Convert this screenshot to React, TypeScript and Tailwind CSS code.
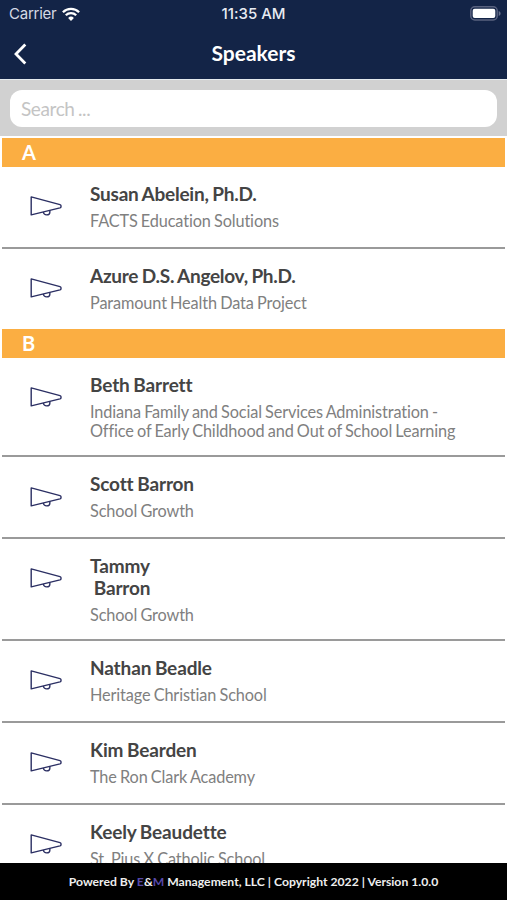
import { useState } from "react";

type Speaker = { name: string[]; org: string[]; tracking?: string };
type Section = { letter: string; speakers: Speaker[] };

const SECTIONS: Section[] = [
  {
    letter: "A",
    speakers: [
      {
        name: ["Susan Abelein, Ph.D."],
        org: ["FACTS Education Solutions"],
        tracking: "tracking-[-0.23px]",
      },
      {
        name: ["Azure D.S. Angelov, Ph.D."],
        org: ["Paramount Health Data Project"],
        tracking: "tracking-[-0.28px]",
      },
    ],
  },
  {
    letter: "B",
    speakers: [
      {
        name: ["Beth Barrett"],
        org: [
          "Indiana Family and Social Services Administration -",
          "Office of Early Childhood and Out of School Learning",
        ],
      },
      { name: ["Scott Barron"], org: ["School Growth"] },
      { name: ["Tammy", " Barron"], org: ["School Growth"] },
      { name: ["Nathan Beadle"], org: ["Heritage Christian School"] },
      { name: ["Kim Bearden"], org: ["The Ron Clark Academy"] },
      { name: ["Keely Beaudette"], org: ["St. Pius X Catholic School"] },
    ],
  },
];

function WifiIcon() {
  return (
    <svg width="18" height="14" viewBox="0 0 18 14" fill="none" stroke="#fff" strokeWidth="2.3">
      <path d="M0.9 5.2a11.5 11.5 0 0 1 16.2 0" />
      <path d="M3.8 8.2a7.4 7.4 0 0 1 10.4 0" />
      <path d="M9 13.9l-2.9-3a4.1 4.1 0 0 1 5.8 0z" fill="#fff" stroke="none" />
    </svg>
  );
}

function BatteryIcon() {
  return (
    <svg width="31" height="15" viewBox="0 0 31 15" fill="none">
      <rect x="0.8" y="0.8" width="26.4" height="13.2" rx="4" stroke="#59627f" strokeWidth="1.5" />
      <rect x="2.7" y="2.7" width="22.6" height="9.4" rx="2" fill="#fff" />
      <path d="M28.7 5v5c1.2-.5 1.9-1.4 1.9-2.5S29.9 5.5 28.7 5z" fill="#68718c" />
    </svg>
  );
}

function Megaphone() {
  return (
    <svg
      width="34"
      height="22"
      viewBox="0 0 34 22"
      fill="none"
      stroke="#2b2f63"
      strokeWidth="1.4"
      strokeLinejoin="round"
      className="shrink-0"
    >
      <path d="M2.2 1.9L31 9.6q1 .3 1 1.2v.9q0 .9-1 1.2L2.2 19.9z" />
      <path d="M14.3 17c.3 1.8 1.5 2.9 3.3 2.9s3.3-1.4 3.3-3.2c0-.5-.1-.9-.3-1.2" />
    </svg>
  );
}

function SpeakerRow({ speaker, last }: { speaker: Speaker; last: boolean }) {
  return (
    <li
      className={`mx-[2px] flex pb-[14.4px] pl-[27px] ${last ? "min-h-[80.2px]" : "min-h-[81.8px] border-b-2 border-[#9a9a9a]"}`}
    >
      <div className="w-[61px] shrink-0 pt-[28.5px]">
        <Megaphone />
      </div>
      <div className="whitespace-pre pt-[16px]">
        <h2
          className={`text-[19px] font-bold leading-[22px] text-[#444] [word-spacing:-0.8px] ${speaker.tracking ?? "tracking-[-0.14px]"}`}
        >
          {speaker.name.join("\n")}
        </h2>
        <p className="mt-[6px] text-[16.3px] leading-[19.6px] tracking-[-0.13px] text-[#808080] [word-spacing:-0.8px]">
          {speaker.org.join("\n")}
        </p>
      </div>
    </li>
  );
}

export default function App() {
  const [query, setQuery] = useState("");

  return (
    <div className="flex h-[900px] w-[507px] flex-col overflow-hidden bg-white font-['Lato',sans-serif] [font-variant-ligatures:none]">
      <header className="h-[79px] shrink-0 bg-[#132447] text-white">
        {/* status bar */}
        <div className="grid h-[27px] grid-cols-3 items-center pl-[9px] pr-[6px] font-['Inter',sans-serif] text-[15px]">
          <div className="flex items-center gap-[6px] text-[#d5dae5]">
            <span className="pt-px tracking-[-0.25px]">Carrier</span>
            <WifiIcon />
          </div>
          <span className="pr-[3px] pt-px text-center font-medium text-[#e8ebf2]">11:35 AM</span>
          <div className="flex justify-end">
            <BatteryIcon />
          </div>
        </div>
        {/* title bar */}
        <div className="grid h-[52px] grid-cols-[60px_1fr_60px] items-center">
          <button type="button" aria-label="Back" className="pl-[13px] pt-[2px]">
            <svg width="15" height="22" viewBox="0 0 15 22" fill="none" stroke="#fff" strokeWidth="2.8">
              <path d="M12.3 1.5L3 11l9.3 9.5" />
            </svg>
          </button>
          <h1 className="text-center text-[21px] font-bold">Speakers</h1>
        </div>
      </header>

      <div className="h-[57px] shrink-0 border-t border-[#e4eaee] bg-[#d1d1d1] px-[10px] pt-[10px]">
        <input
          value={query}
          onChange={(e) => setQuery(e.target.value)}
          placeholder="Search ..."
          className="block h-[37px] w-full rounded-[12px] bg-white px-[11px] text-[19px] tracking-[-0.4px] outline-none [word-spacing:-1px] placeholder:text-[#c4c4c4]"
        />
      </div>

      <main className="min-h-0 flex-1 overflow-hidden pt-[2px]">
        {SECTIONS.map((section) => (
          <section key={section.letter}>
            <div className="mx-[2px] flex h-[28.8px] items-center bg-[#fbae42] pb-px pl-[20px] text-[20px] font-bold text-white">
              {section.letter}
            </div>
            <ul>
              {section.speakers.map((s, i) => (
                <SpeakerRow key={s.name[0]} speaker={s} last={i === section.speakers.length - 1} />
              ))}
            </ul>
          </section>
        ))}
      </main>

      <footer className="flex h-[37px] shrink-0 items-center justify-center bg-black pt-px text-[12.2px] font-bold text-[#eee]">
        <p>
          Powered By <span className="text-[#5648a8]">E</span>&amp;<span className="text-[#5648a8]">M</span> Management, LLC
          | Copyright 2022 | Version 1.0.0
        </p>
      </footer>
    </div>
  );
}
